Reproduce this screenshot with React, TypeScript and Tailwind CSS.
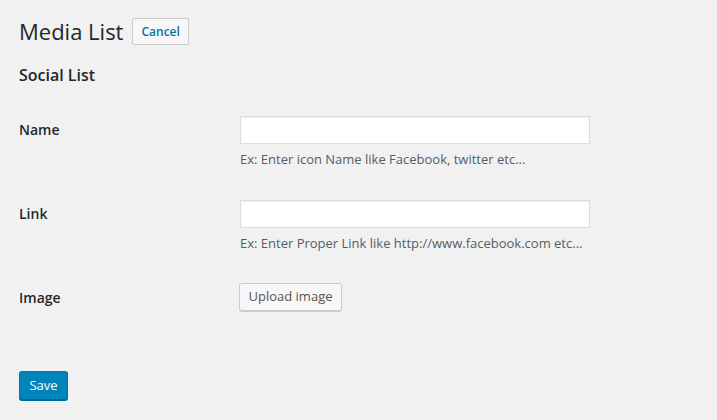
import React from 'react'

const font = { fontFamily: '"Open Sans", "Noto Sans", sans-serif' }

function Row({ label, children }: { label: string; children: React.ReactNode }) {
  return (
    <div className="flex py-[15px]">
      <div className="w-[221px] shrink-0 pt-[5px] text-[14px] font-semibold leading-[18px] text-[#23282d]">
        {label}
      </div>
      <div className="flex flex-col">{children}</div>
    </div>
  )
}

export default function App() {
  return (
    <main
      className="min-h-[420px] w-full bg-[#f1f1f1] pl-[19px] pt-[16px] text-[13px] text-[#444]"
      style={font}
    >
      {/* Title */}
      <div className="flex items-center gap-[9px]">
        <h1 className="text-[22px] font-normal leading-[30px] text-[#23282d]">Media List</h1>
        <a
          href="#"
          className="mt-[1px] flex h-[27px] items-center rounded-[2px] border border-[#ccc] bg-[#f7f7f7] px-[8px] text-[12px] font-semibold text-[#0073aa]"
        >
          Cancel
        </a>
      </div>

      <h2 className="mt-[17px] text-[16px] font-semibold leading-[24px] text-[#23282d]">
        Social List
      </h2>

      {/* Form table */}
      <div className="mt-[14px] flex flex-col">
        <Row label="Name">
          <input
            type="text"
            className="h-[28px] w-[350px] border border-[#ddd] bg-white shadow-[inset_0_1px_2px_rgba(0,0,0,0.07)] outline-none"
          />
          <p className="mt-[5px] text-[13px] leading-[21px] text-[#555d66]">
            Ex: Enter icon Name like Facebook, twitter etc...
          </p>
        </Row>
        <Row label="Link">
          <input
            type="text"
            className="h-[28px] w-[350px] border border-[#ddd] bg-white shadow-[inset_0_1px_2px_rgba(0,0,0,0.07)] outline-none"
          />
          <p className="mt-[5px] text-[13px] leading-[21px] text-[#555d66]">
            Ex: Enter Proper Link like http://www.facebook.com etc...
          </p>
        </Row>
        <div className="flex pt-[14px]">
          <div className="w-[220px] shrink-0 pt-[6px] text-[14px] font-semibold leading-[18px] text-[#23282d]">
            Image
          </div>
          <button
            type="button"
            className="h-[28px] w-[103px] rounded-[3px] border border-[#ccc] bg-[#f7f7f7] text-[13px] text-[#555] shadow-[0_1px_0_#ccc]"
          >
            Upload image
          </button>
        </div>
      </div>

      <div className="pt-[60px]">
        <button
          type="button"
          className="h-[29px] w-[49px] rounded-[3px] border border-[#0073aa] border-b-[#006799] bg-[#0085ba] text-[13px] text-white shadow-[0_1px_0_#006799]"
        >
          Save
        </button>
      </div>
    </main>
  )
}
